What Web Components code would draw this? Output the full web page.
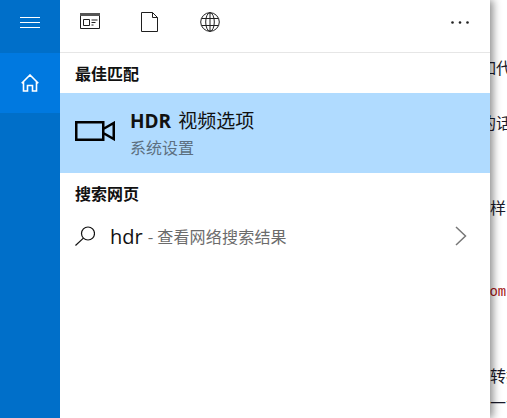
<!DOCTYPE html>
<html lang="zh">
<head>
<meta charset="utf-8">
<title>Search</title>
<style>
  html, body { margin: 0; height: 100%; }
  body { overflow: hidden; font-family: "Open Sans", "Noto Sans CJK SC", sans-serif; background: #fff; }
</style>
</head>
<body>
<search-screen>
  <back-page slot="back"></back-page>
  <nav-rail slot="rail"></nav-rail>
  <search-tabs slot="main"></search-tabs>
  <section-title slot="main" style="height:40px">最佳匹配</section-title>
  <best-match slot="main"></best-match>
  <section-title slot="main" style="height:39px">搜索网页</section-title>
  <web-row slot="main" query="hdr" hint="- 查看网络搜索结果"></web-row>
</search-screen>

<script>
// search-screen.js

class SearchScreen extends HTMLElement {
  constructor(){
    super();
    this.root = this.attachShadow({mode: 'open'});
    this.root.innerHTML = `
    <style>
    :host { display: block; position: relative; width: 507px; height: 418px; overflow: hidden; }
    .panel {
      position: absolute;
      left: 0; top: 0; bottom: 0;
      width: 490px;
      display: flex;
      background: white;
      box-shadow: 3px 0 8px rgba(0,0,0,0.45);
    }
    .main { flex: 1; display: flex; flex-direction: column; min-width: 0; }
    </style>
    <slot name="back"></slot>
    <div class="panel">
      <slot name="rail"></slot>
      <div class="main"><slot name="main"></slot></div>
    </div>`;
  }
}

class BackPage extends HTMLElement {
  constructor(){
    super();
    this.root = this.attachShadow({mode: 'open'});
    this.root.innerHTML = `
    <style>
    :host {
      display: block;
      height: 418px;
      padding-left: 474px;
      box-sizing: border-box;
      background: #fff;
      font: 16px/20px "Noto Sans CJK SC", sans-serif;
      color: #1a1a2a;
      white-space: nowrap;
      overflow: hidden;
    }
    div { height: 20px; }
    .red { color: #a31515; font: 14px/20px "Liberation Mono", monospace; }
    </style>
    <div style="margin-top:57px;padding-left:6px">如代</div>
    <div style="margin-top:35px;padding-left:6px">的话</div>
    <div style="margin-top:65px">这样</div>
    <div class="red" style="margin-top:65px;padding-left:7px">com,</div>
    <div style="margin-top:63px">可转换</div>
    <div style="margin-top:7px">这一个</div>`;
  }
}

class NavRail extends HTMLElement {
  constructor(){
    super();
    this.root = this.attachShadow({mode: 'open'});
    this.root.innerHTML = `
    <style>
    :host { display: flex; flex-direction: column; flex: none; width: 60px; background: #006fc9; }
    .cell { height: 60px; display: flex; align-items: center; justify-content: center; }
    .menu { height: 46px; padding-bottom: 7px; }
    .home { background: #0079e0; }
    svg { display: block; fill: none; stroke: white; }
    </style>
    <div class="cell menu">
      <svg width="20" height="12" viewBox="0 0 20 12" stroke-width="1"><path d="M0 .5h20M0 5.500h20M0 10.500h20"/></svg>
    </div>
    <div class="cell home">
      <svg width="18" height="18" viewBox="0 0 18 18" stroke-width="1.600"><path d="M.7 9.300 9 1l8.300 8.300M2.500 7.500V17h4v-5.500h5V17h4V7.500"/></svg>
    </div>`;
  }
}

class SearchTabs extends HTMLElement {
  constructor(){
    super();
    this.root = this.attachShadow({mode: 'open'});
    this.root.innerHTML = `
    <style>
    :host {
      display: flex;
      flex: none;
      align-items: center;
      height: 44px;
      padding: 0 21px 8px 20px;
      border-bottom: 1px solid #e6e6e6;
    }
    svg { display: block; fill: none; stroke: #1f1f1f; }
    .dots { margin-left: auto; }
    .dots circle { fill: #222; stroke: none; }
    </style>
    <svg width="20" height="16" viewBox="0 0 20 16" stroke="#444" style="margin-bottom:2px"><path d="M.5.500h19v15H.5z"/><path d="M0 0h20v3H0z" fill="#555" stroke="none"/><path d="M3.500 6.500h6v6h-6zM11.500 7h6M11.500 9.500h4M11.500 12h2"/></svg>
    <svg width="17" height="20" viewBox="0 0 17 20" style="margin-left:41px"><path d="M.5.500h11l5 5v14H.5zM11.500.500v5h5"/></svg>
    <svg width="20" height="20" viewBox="0 0 20 20" style="margin-left:42px"><circle cx="10" cy="10" r="9.300"/><ellipse cx="10" cy="10" rx="4.300" ry="9.300"/><path d="M10 .7v18.600M1.500 6.500h17M1.500 13.500h17"/></svg>
    <svg class="dots" width="18" height="3" viewBox="0 0 18 3"><circle cx="1.500" cy="1.500" r="1.300"/><circle cx="9" cy="1.500" r="1.300"/><circle cx="16.500" cy="1.500" r="1.300"/></svg>`;
  }
}

class SectionTitle extends HTMLElement {
  constructor(){
    super();
    this.root = this.attachShadow({mode: 'open'});
    this.root.innerHTML = `
    <style>
    :host {
      display: flex;
      flex: none;
      align-items: center;
      padding-left: 15px;
      font: 700 16px "Noto Sans CJK SC", sans-serif;
      color: #111;
    }
    </style>
    <slot></slot>`;
  }
}

class BestMatch extends HTMLElement {
  constructor(){
    super();
    this.root = this.attachShadow({mode: 'open'});
    this.root.innerHTML = `
    <style>
    :host {
      display: flex;
      flex: none;
      align-items: center;
      height: 80px;
      background: #b0dbff;
      padding-left: 15px;
    }
    svg { display: block; flex: none; fill: none; stroke: black; stroke-width: 2.500; margin: 0 15px 4px 0; }
    .title { font: 19px/24px "Open Sans", "Noto Sans CJK SC", sans-serif; color: #111; display: flex; gap: 7px; }
    b { font-weight: 700; }
    .sub { font: 16px/20px "Noto Sans CJK SC", sans-serif; color: #5c6f80; margin-top: 4px; }
    </style>
    <svg width="40" height="20" viewBox="0 0 40 20"><path d="M1.250 1.250h27v17.500h-27zM28.250 8l10.500-6v16l-10.500-6"/></svg>
    <div>
      <div class="title"><b>HDR</b><span>视频选项</span></div>
      <div class="sub">系统设置</div>
    </div>`;
  }
}

class WebRow extends HTMLElement {
  constructor(){
    super();
    const query = this.getAttribute('query');
    const hint = this.getAttribute('hint');
    this.root = this.attachShadow({mode: 'open'});
    this.root.innerHTML = `
    <style>
    :host {
      display: flex;
      flex: none;
      align-items: center;
      height: 48px;
      padding: 0 23px 0 15px;
    }
    svg { display: block; flex: none; fill: none; }
    .q { margin-left: 15px; font: 20px "Open Sans", sans-serif; color: #111; }
    .hint { margin-left: 5px; font: 16px "Noto Sans CJK SC", sans-serif; letter-spacing: .2px; color: #6b6b6b; }
    .chev { margin-left: auto; }
    </style>
    <svg width="20" height="20" viewBox="0 0 20 20" stroke="#111" stroke-width="1.200"><circle cx="13" cy="7.500" r="6.500"/><path d="M8.400 12.100 .5 19.500"/></svg>
    <span class="q"></span><span class="hint"></span>
    <svg class="chev" width="12" height="20" viewBox="0 0 12 20" stroke="#777" stroke-width="1.500"><path d="M1 1l9.500 9L1 19"/></svg>`;
    this.root.querySelector('.q').textContent = query;
    this.root.querySelector('.hint').textContent = hint;
  }
}

customElements.define('search-screen', SearchScreen);
customElements.define('back-page', BackPage);
customElements.define('nav-rail', NavRail);
customElements.define('search-tabs', SearchTabs);
customElements.define('section-title', SectionTitle);
customElements.define('best-match', BestMatch);
customElements.define('web-row', WebRow);
</script>
</body>
</html>
